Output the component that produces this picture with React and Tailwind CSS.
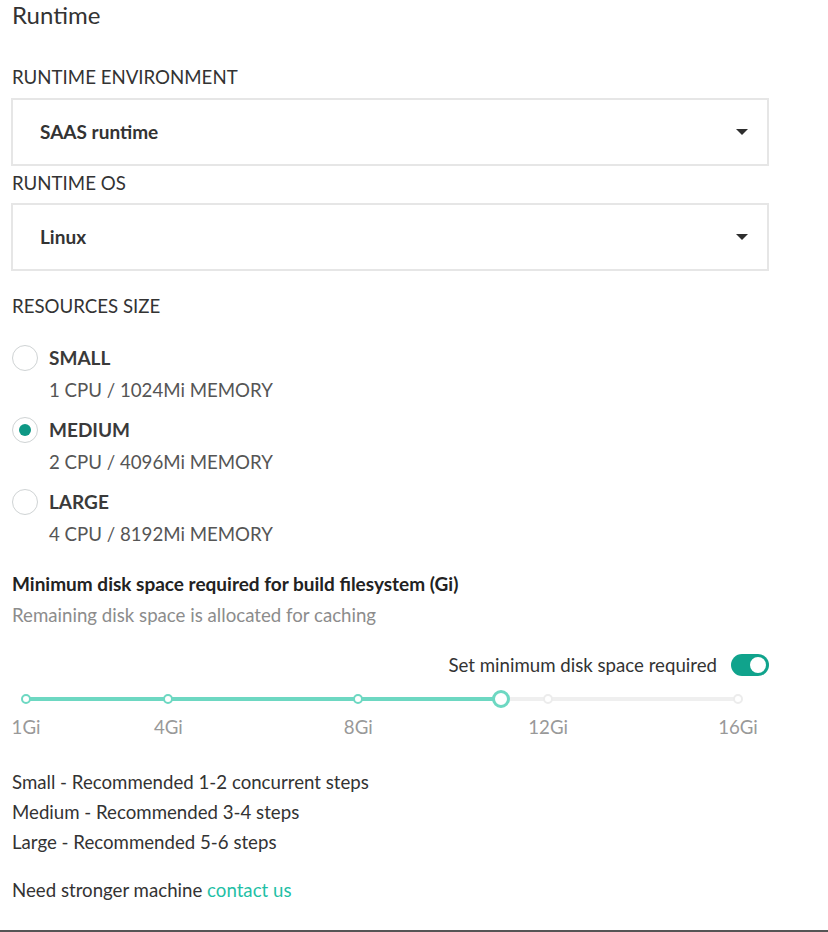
import React from "react";

const marks = [1, 4, 8, 12, 16];
const MIN = 1;
const MAX = 16;
const VALUE = 11;
const pct = (v) => ((v - MIN) / (MAX - MIN)) * 100;

function Caret() {
  return (
    <svg width="12" height="6" viewBox="0 0 12 6" className="shrink-0">
      <path d="M0 0 L12 0 L6 6 Z" fill="#2e2e2e" />
    </svg>
  );
}

function Select({ value }) {
  return (
    <div className="flex h-[68px] w-[758px] items-center justify-between border-2 border-[#e6e6e6] bg-white pl-[27px] pr-[19px]">
      <span className="text-[19px] font-bold text-[#333]">{value}</span>
      <Caret />
    </div>
  );
}

function Radio({ label, sub, checked }) {
  return (
    <div className="flex flex-col">
      <div className="flex h-[32px] items-center">
        <div className="flex h-[26px] w-[26px] items-center justify-center rounded-full border-[1.5px] border-[#cfd3d4] bg-white">
          {checked && <div className="h-[12px] w-[12px] rounded-full bg-[#0e9885]" />}
        </div>
        <span className="ml-[11px] text-[19px] font-bold text-[#3a3a3a]">{label}</span>
      </div>
      <div className="ml-[37px] flex h-[32px] items-center text-[18.67px] text-[#555]">{sub}</div>
    </div>
  );
}

export default function App() {
  return (
    <div
      className="h-[932px] w-[828px] border-b-2 border-[#555] bg-white text-[#333]"
      style={{ fontFamily: "Lato, 'Open Sans', sans-serif" }}
    >
      <div className="w-[780px] px-[11px]">
        <h2 className="pl-px text-[24px] leading-[30px] text-[#333]">Runtime</h2>

        <div className="mt-[35px] mb-[9px] pl-px text-[18.67px] leading-[24px] text-[#333]">
          RUNTIME ENVIRONMENT
        </div>
        <Select value="SAAS runtime" />

        <div className="mt-[5px] mb-[8px] pl-px text-[18.67px] leading-[24px] text-[#333]">RUNTIME OS</div>
        <Select value="Linux" />

        <div className="mt-[23px] pl-px text-[18.67px] leading-[24px] text-[#333]">RESOURCES SIZE</div>

        <div className="mt-[24px] flex flex-col gap-[8px] pl-px">
          <Radio label="SMALL" sub="1 CPU / 1024Mi MEMORY" />
          <Radio label="MEDIUM" sub="2 CPU / 4096Mi MEMORY" checked />
          <Radio label="LARGE" sub="4 CPU / 8192Mi MEMORY" />
        </div>

        <div className="mt-[22px] pl-px text-[19px] font-bold leading-[24px] text-[#222]">
          Minimum disk space required for build filesystem (Gi)
        </div>
        <div className="mt-[7px] pl-px text-[18.67px] leading-[24px] text-[#8c8c8c]">
          Remaining disk space is allocated for caching
        </div>

        <div className="mt-[27px] flex h-[22px] items-center justify-end gap-[14px]">
          <span className="text-[18.67px] text-[#333]">Set minimum disk space required</span>
          <div className="flex h-[22px] w-[38px] items-center justify-end rounded-full bg-[#10a38c] pr-[3px]">
            <div className="h-[16px] w-[16px] rounded-full bg-white" />
          </div>
        </div>

        <div className="relative ml-[15px] mt-[13px] h-[20px] w-[712px]">
          <div className="absolute left-0 right-0 top-[8px] h-[4px] rounded-full bg-[#efefef]" />
          <div
            className="absolute left-0 top-[8px] h-[4px] rounded-full bg-[#6dd8c2]"
            style={{ width: `${pct(VALUE)}%` }}
          />
          {marks.map((m) => (
            <div
              key={m}
              className={
                "absolute top-[5px] h-[10px] w-[10px] -translate-x-1/2 rounded-full border-2 bg-white " +
                (m <= VALUE ? "border-[#6dd8c2]" : "border-[#ececec]")
              }
              style={{ left: `${pct(m)}%` }}
            />
          ))}
          <div
            className="absolute top-[1px] h-[18px] w-[18px] -translate-x-1/2 rounded-full border-[3px] border-[#6dd8c2] bg-white"
            style={{ left: `${pct(VALUE)}%` }}
          />
        </div>
        <div className="relative ml-[15px] mt-[6px] h-[24px] w-[712px]">
          {marks.map((m) => (
            <span
              key={m}
              className="absolute top-0 -translate-x-1/2 text-[18.67px] leading-[24px] text-[#999]"
              style={{ left: `${pct(m)}%` }}
            >
              {m}Gi
            </span>
          ))}
        </div>

        <div className="mt-[28px] pl-px text-[18.67px] leading-[30px] text-[#333]">
          <div>Small - Recommended 1-2 concurrent steps</div>
          <div>Medium - Recommended 3-4 steps</div>
          <div>Large - Recommended 5-6 steps</div>
        </div>

        <div className="mt-[18px] pl-px text-[18.67px] leading-[30px] text-[#333]">
          Need stronger machine <span className="text-[#1fbfa6]">contact us</span>
        </div>
      </div>
    </div>
  );
}
